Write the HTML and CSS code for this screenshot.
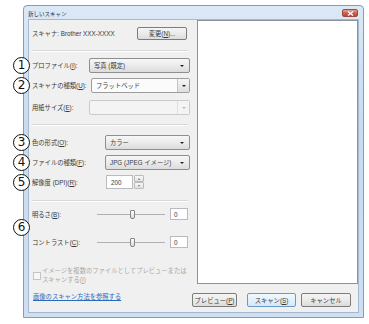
FILE: index.html
```html
<!DOCTYPE html>
<html lang="ja">
<head>
  <meta charset="UTF-8">
  <title>新しいスキャン</title>
  <link rel="stylesheet" href="styles.css">
</head>
<body>
  <div class="window">
    <div class="titlebar">
      <span class="title">新しいスキャン</span>
      <span class="close">
        <svg width="7" height="5" viewBox="0 0 7 5"><path d="M1 0.5 L6 4.5 M6 0.5 L1 4.5" stroke="#fff" stroke-width="1.3"/></svg>
      </span>
    </div>

    <div class="client">
      <!-- left: scan settings -->
      <div class="settings">
        <div class="row scanner-row">
          <span>スキャナ: Brother XXX-XXXX</span>
          <button class="btn change-btn">変更(<u>N</u>)...</button>
        </div>
        <div class="sep sep-top"></div>

        <div class="row field r-profile">
          <span class="marker">1</span>
          <label>プロファイル(<u>I</u>):</label>
          <div class="select w-wide">写真 (既定)<i class="caret"></i></div>
        </div>
        <div class="row field r-type">
          <span class="marker">2</span>
          <label>スキャナの種類(<u>U</u>):</label>
          <div class="select combo w-type">フラットベッド<span class="drop"><i class="caret"></i></span></div>
        </div>
        <div class="row field r-paper">
          <label>用紙サイズ(<u>E</u>):</label>
          <div class="select combo disabled w-wide"><span class="drop"><i class="caret"></i></span></div>
        </div>
        <div class="sep sep-mid"></div>

        <div class="row field r-color">
          <span class="marker">3</span>
          <label>色の形式(<u>O</u>):</label>
          <div class="select w-narrow">カラー<i class="caret"></i></div>
        </div>
        <div class="row field r-file">
          <span class="marker">4</span>
          <label>ファイルの種類(<u>F</u>):</label>
          <div class="select w-narrow">JPG (JPEG イメージ)<i class="caret"></i></div>
        </div>
        <div class="row r-dpi">
          <span class="marker">5</span>
          <label class="dpi-label">解像度 (DPI)(<u>R</u>):</label>
          <div class="spin">
            <span class="spin-value">200</span>
            <span class="spin-btns">
              <span class="spin-up"></span>
              <span class="spin-down"></span>
            </span>
          </div>
        </div>
        <div class="sep sep-low"></div>

        <div class="row r-bright">
          <span class="marker m6">6</span>
          <label>明るさ(<u>B</u>):</label>
          <div class="slider"><span class="thumb"></span></div>
          <span class="num-box">0</span>
        </div>
        <div class="row r-contrast">
          <label>コントラスト(<u>C</u>):</label>
          <div class="slider"><span class="thumb"></span></div>
          <span class="num-box">0</span>
        </div>

        <div class="check-row">
          <span class="checkbox"></span>
          <span>イメージを複数のファイルとしてプレビューまたは<br>スキャンする(<u>I</u>)</span>
        </div>
        <a class="help-link" href="#">画像のスキャン方法を参照する</a>
      </div>

      <!-- right: preview + actions -->
      <div class="preview-col">
        <div class="preview"></div>
        <div class="actions">
          <button class="btn act-preview">プレビュー(<u>P</u>)</button>
          <button class="btn default act-scan">スキャン(<u>S</u>)</button>
          <button class="btn act-cancel">キャンセル</button>
        </div>
      </div>
    </div>
  </div>
</body>
</html>
```

FILE: styles.css
```css
/* === PAGE === */
body {
  margin: 0;
  background: #fff;
  font-family: "Liberation Sans", "Noto Sans CJK JP", sans-serif;
  font-size: 6.3px;
  color: #3a3a3a;
}
u {
  text-decoration: underline;
}

/* === WINDOW FRAME === */
.window {
  box-sizing: border-box;
  margin: 5px 0 0 23px;
  width: 341px;
  height: 313px;
  border: 1px solid #7e9dc0;
  border-radius: 4px 4px 0 0;
  background: linear-gradient(#dbe8f6, #c9dbef 40%, #cfdff1);
  padding: 0 4px 4px;
  display: flex;
  flex-direction: column;
}
.titlebar {
  height: 13px;
  display: flex;
  align-items: flex-start;
  justify-content: space-between;
}
.title {
  font-size: 5.5px;
  color: #25313f;
  margin-top: 5px;
  line-height: 6px;
}
.close {
  width: 16px;
  height: 8px;
  margin-top: 3px;
  margin-right: 1px;
  border: 1px solid #9a4a40;
  border-radius: 2px;
  box-sizing: border-box;
  background: linear-gradient(#e8a498, #cf5a4b 55%, #c04636);
  display: flex;
  align-items: center;
  justify-content: center;
}
.close svg {
  display: block;
}

/* === CLIENT AREA === */
.client {
  flex: 1;
  display: flex;
  background: #f0f0f0;
  border: 1px solid #a4b8cf;
}
.settings {
  width: 162px;
  box-sizing: border-box;
  padding: 0 1px 0 3px;
  display: flex;
  flex-direction: column;
}
.row {
  display: flex;
  align-items: center;
  position: relative;
}
.row label {
  white-space: nowrap;
}
.scanner-row {
  margin-top: 7px;
  height: 13px;
}
.sep {
  height: 1px;
  border-top: 1px solid #d8d8d8;
  background: #fff;
  margin-right: 2px;
}
.sep-top { margin-top: 10px; }
.sep-mid { margin-top: 9px; }
.sep-low { margin-top: 11px; }

.field {
  height: 15px;
}
.r-profile { margin-top: 6px; }
.r-type { margin-top: 5px; }
.r-paper { margin-top: 7px; }
.r-color { margin-top: 9px; }
.r-file { margin-top: 5px; }
.r-dpi { margin-top: 5px; height: 14px; }

/* numbered annotation circles */
.marker {
  position: absolute;
  left: -19px;
  top: 50%;
  margin-top: -8.5px;
  width: 17px;
  height: 17px;
  box-sizing: border-box;
  border: 1.2px solid #111;
  border-radius: 50%;
  background: #fff;
  color: #111;
  font-family: "DejaVu Sans", sans-serif;
  font-size: 12px;
  line-height: 15px;
  text-align: center;
}
.marker.m6 {
  margin-top: 4.5px;
}

/* === DROPDOWNS === */
.select {
  margin-left: auto;
  height: 15px;
  box-sizing: border-box;
  border: 1px solid #8f8f8f;
  border-radius: 2px;
  background: linear-gradient(#f7f7f7, #ebebeb 50%, #dcdcdc);
  display: flex;
  align-items: center;
  padding-left: 4px;
  white-space: nowrap;
}
.w-wide { width: 101px; }
.w-type { width: 99px; }
.w-narrow { width: 85px; }
.caret {
  margin-left: auto;
  margin-right: 5px;
  width: 0;
  height: 0;
  border-left: 2px solid transparent;
  border-right: 2px solid transparent;
  border-top: 2.5px solid #222;
}
.select.combo {
  background: #fbfbfb;
  border-color: #9c9c9c;
}
.drop {
  margin-left: auto;
  align-self: stretch;
  width: 11px;
  border-left: 1px solid #c4c4c4;
  background: linear-gradient(#f6f6f6, #dedede);
  display: flex;
  align-items: center;
  justify-content: center;
}
.drop .caret {
  margin: 0;
}
.select.disabled {
  background: #f4f4f4;
  border-color: #cbcbcb;
}
.select.disabled .drop {
  background: #f4f4f4;
  border-left-color: #e0e0e0;
}
.select.disabled .caret {
  border-top-color: #b8b8b8;
}

/* === SPIN BOX === */
.dpi-label {
  width: 74px;
}
.spin {
  display: flex;
  height: 14px;
}
.spin-value {
  width: 27px;
  box-sizing: border-box;
  border: 1px solid #b8bbc0;
  background: #fff;
  padding-left: 4px;
  display: flex;
  align-items: center;
}
.spin-btns {
  width: 10px;
  display: flex;
  flex-direction: column;
  margin-left: 1px;
}
.spin-up, .spin-down {
  flex: 1;
  border: 1px solid #bcbcbc;
  border-radius: 1px;
  background: linear-gradient(#f8f8f8, #e2e2e2);
  display: flex;
  align-items: center;
  justify-content: center;
}
.spin-up::after {
  content: "";
  border-left: 1.5px solid transparent;
  border-right: 1.5px solid transparent;
  border-bottom: 2px solid #777;
}
.spin-down::after {
  content: "";
  border-left: 1.5px solid transparent;
  border-right: 1.5px solid transparent;
  border-top: 2px solid #777;
}

/* === SLIDERS === */
.r-bright {
  margin-top: 6px;
  height: 12px;
}
.r-contrast {
  margin-top: 16px;
  height: 12px;
}
.r-bright label, .r-contrast label {
  flex: 1;
}
.slider {
  width: 68px;
  height: 12px;
  display: flex;
  align-items: center;
  background: linear-gradient(#b0b0b0, #b0b0b0) center / 100% 1px no-repeat;
}
.thumb {
  margin-left: 33px;
  width: 5px;
  height: 9px;
  box-sizing: border-box;
  border: 1px solid #858585;
  border-radius: 1px 1px 2px 2px;
  background: linear-gradient(#fdfdfd, #dcdcdc);
}
.num-box {
  width: 18px;
  height: 12px;
  box-sizing: border-box;
  margin: 0 2px 0 5px;
  border: 1px solid #b8bbc0;
  background: #fff;
  padding-left: 3px;
  display: flex;
  align-items: center;
}

/* === CHECKBOX + LINK === */
.check-row {
  margin-top: 18px;
  display: flex;
  align-items: flex-start;
  color: #a8a8a8;
  line-height: 9px;
  white-space: nowrap;
}
.checkbox {
  width: 8px;
  height: 8px;
  box-sizing: border-box;
  margin: 6px 1px 0 1px;
  border: 1px solid #c4c4c4;
  background: #f7f7f7;
  flex-shrink: 0;
}
.help-link {
  margin-top: 8px;
  margin-left: 1px;
  color: #2a6abb;
  line-height: 9px;
}

/* === PREVIEW + ACTIONS === */
.preview-col {
  flex: 1;
  display: flex;
  flex-direction: column;
}
.preview {
  margin-left: 6px;
  height: 264px;
  box-sizing: border-box;
  border: 1px solid #8e939a;
  background: #fff;
}
.actions {
  display: flex;
  margin-top: 9px;
  padding-left: 1px;
}
.btn {
  height: 14px;
  box-sizing: border-box;
  border: 1px solid #7c7c7c;
  border-radius: 2px;
  background: linear-gradient(#f5f5f5, #ebebeb 50%, #dcdcdc);
  font-family: inherit;
  font-size: 6.3px;
  color: #3a3a3a;
  padding: 0;
  white-space: nowrap;
}
.btn.default {
  border-color: #6a9bc8;
  background: linear-gradient(#f2f9fe, #e2f1fb 50%, #d3e8f8);
}
.change-btn {
  margin-left: auto;
  margin-right: 3px;
  width: 50px;
  height: 13px;
}
.act-preview { width: 45px; }
.act-scan { width: 49px; margin-left: 10px; }
.act-cancel { width: 50px; margin-left: 5px; }
```
